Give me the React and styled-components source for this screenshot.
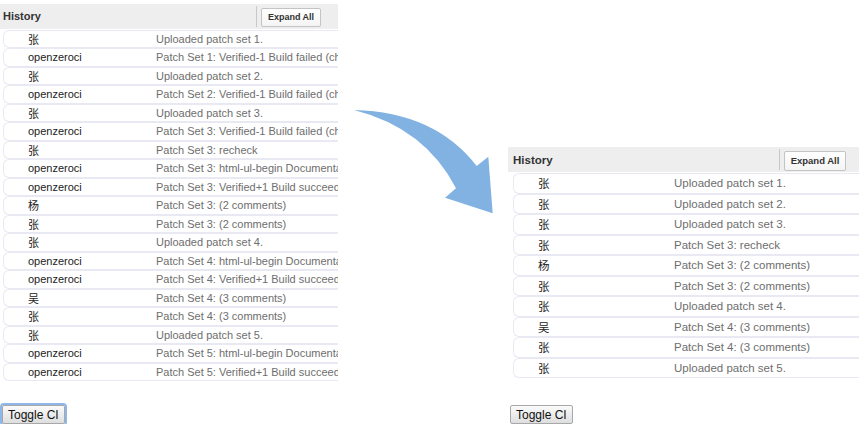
import React from 'react';
import styled, { createGlobalStyle } from 'styled-components';

const GlobalStyle = createGlobalStyle`
  html, body {
    margin: 0;
    padding: 0;
    overflow: hidden;
    background: #fff;
    font-family: "Liberation Sans", Arial, "Noto Sans CJK SC", sans-serif;
  }
`;

const before = [
  ['张', 'Uploaded patch set 1.'],
  ['openzeroci', 'Patch Set 1: Verified-1 Build failed (check pipeline). For information on how to proceed'],
  ['张', 'Uploaded patch set 2.'],
  ['openzeroci', 'Patch Set 2: Verified-1 Build failed (check pipeline). For information on how to proceed'],
  ['张', 'Uploaded patch set 3.'],
  ['openzeroci', 'Patch Set 3: Verified-1 Build failed (check pipeline). For information on how to proceed'],
  ['张', 'Patch Set 3: recheck'],
  ['openzeroci', 'Patch Set 3: html-ul-begin Documentation build'],
  ['openzeroci', 'Patch Set 3: Verified+1 Build succeeded (check pipeline).'],
  ['杨', 'Patch Set 3: (2 comments)'],
  ['张', 'Patch Set 3: (2 comments)'],
  ['张', 'Uploaded patch set 4.'],
  ['openzeroci', 'Patch Set 4: html-ul-begin Documentation build'],
  ['openzeroci', 'Patch Set 4: Verified+1 Build succeeded (check pipeline).'],
  ['吴', 'Patch Set 4: (3 comments)'],
  ['张', 'Patch Set 4: (3 comments)'],
  ['张', 'Uploaded patch set 5.'],
  ['openzeroci', 'Patch Set 5: html-ul-begin Documentation build'],
  ['openzeroci', 'Patch Set 5: Verified+1 Build succeeded (check pipeline).'],
];

const after = before.filter(([who]) => who !== 'openzeroci');

const Page = styled.div`
  display: flex;
  align-items: flex-end;
  height: 424px;
`;

const Column = styled.div`
  display: flex;
  flex-direction: column;
  flex: 0 0 ${(p) => p.width}px;
  width: ${(p) => p.width}px;
`;

const ArrowCol = styled.div`
  flex: 0 0 170px;
  align-self: flex-start;
  padding: 105px 0 0 12px;
  box-sizing: border-box;
`;

const Panel = styled.div`
  overflow: hidden;
  white-space: nowrap;
`;

const Header = styled.div`
  display: flex;
  align-items: center;
  height: 25px;
  background: #eeeeee;
  padding: 0 17px 0 ${(p) => p.pad}px;
  margin-bottom: 1px;
`;

const Title = styled.div`
  flex: 1;
  font-weight: bold;
  font-size: ${(p) => p.size}px;
  color: #333;
`;

const Divider = styled.div`
  width: 1px;
  height: 21px;
  background: #c8c8c8;
  margin-right: 4px;
`;

const ExpandButton = styled.button`
  font-family: inherit;
  font-weight: bold;
  font-size: ${(p) => p.size}px;
  color: #333;
  height: ${(p) => p.h}px;
  width: ${(p) => p.w}px;
  padding: 0;
  margin-top: 2px;
  border: 1px solid #c4c4c4;
  border-radius: 2px;
  background: linear-gradient(#ffffff, #f4f4f4);
`;

const Rows = styled.div`
  padding-left: ${(p) => p.pad}px;
`;

const Row = styled.div`
  display: grid;
  grid-template-columns: ${(p) => p.split}px 1fr;
  align-items: center;
  height: ${(p) => p.h}px;
  box-sizing: border-box;
  border: 1px solid #e9e9f3;
  border-right: none;
  border-radius: 6px 0 0 6px;
  font-size: ${(p) => p.size}px;
  padding-left: 24px;
`;

const Author = styled.span`
  color: #222;
`;

const Message = styled.span`
  color: #6e6e6e;
  overflow: hidden;
`;

const ToggleButton = styled.button`
  align-self: flex-start;
  margin: ${(p) => p.gap}px 0 0 2px;
  font-family: inherit;
  font-size: 12px;
  color: #111;
  height: 19px;
  padding: 0 5px;
  border: 1px solid #a8a8a8;
  border-radius: 2px;
  background: linear-gradient(#fbfbfb, #dedede);
  box-shadow: ${(p) => (p.focused ? '0 0 0 2px #8db7ea' : 'none')};
`;

const Arrow = () => (
  <svg width="150" height="115" viewBox="0 0 150 115">
    <path
      d="M4 5 Q85 7 126.7 61 L138.3 51.7 L142.7 108.3 L95 92.7 L106 83.3 Q75 23 4 5 Z"
      fill="#81b2e2"
    />
  </svg>
);

const History = ({ items, width, pad, title, btn, rowH, fontSize, split, gap, focused }) => (
  <Column width={width}>
    <Panel>
      <Header pad={pad}>
        <Title size={title}>History</Title>
        <Divider />
        <ExpandButton size={btn.size} w={btn.w} h={btn.h}>Expand All</ExpandButton>
      </Header>
      <Rows pad={pad}>
        {items.map(([who, msg], i) => (
          <Row key={i} h={rowH} size={fontSize} split={split}>
            <Author>{who}</Author>
            <Message>{msg}</Message>
          </Row>
        ))}
      </Rows>
    </Panel>
    <ToggleButton gap={gap} focused={focused}>Toggle CI</ToggleButton>
  </Column>
);

export default function App() {
  return (
    <>
      <GlobalStyle />
      <Page>
        <History
          items={before}
          width={338}
          pad={3}
          title={11}
          btn={{ size: 9, w: 60, h: 19 }}
          rowH={18.5}
          fontSize={11}
          split={128}
          gap={24}
          focused
        />
        <ArrowCol>
          <Arrow />
        </ArrowCol>
        <History
          items={after}
          width={355}
          pad={5}
          title={11.5}
          btn={{ size: 9.5, w: 62, h: 20 }}
          rowH={20.5}
          fontSize={11.5}
          split={136}
          gap={27}
        />
      </Page>
    </>
  );
}
